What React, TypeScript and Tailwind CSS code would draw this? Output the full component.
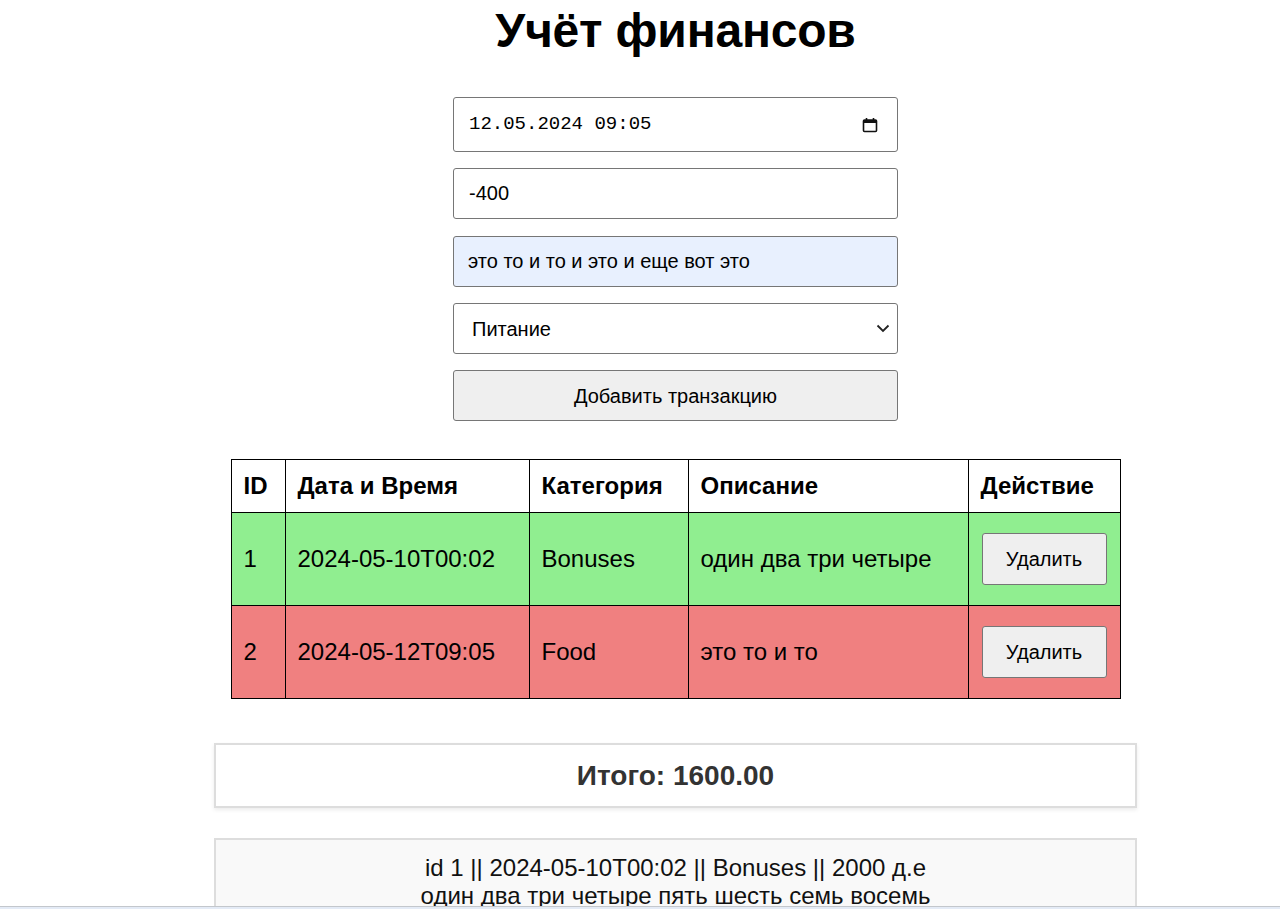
import React from "react";

type Tx = {
  id: number;
  date: string;
  category: string;
  description: string;
  income: boolean;
};

const rows: Tx[] = [
  { id: 1, date: "2024-05-10T00:02", category: "Bonuses", description: "один два три четыре", income: true },
  { id: 2, date: "2024-05-12T09:05", category: "Food", description: "это то и то", income: false },
];

function CalendarIcon() {
  return (
    <svg width="16" height="16" viewBox="0 0 16 16" fill="none">
      <rect x="1.5" y="3" width="13" height="11.5" rx="1" stroke="#111" strokeWidth="1.6" />
      <rect x="1.5" y="3" width="13" height="3" fill="#111" />
      <path d="M4.5 1v3M11.5 1v3" stroke="#111" strokeWidth="1.6" />
    </svg>
  );
}

function Chevron() {
  return (
    <svg width="14" height="9" viewBox="0 0 14 9" fill="none">
      <path d="M1.5 1.5l5.5 5.5 5.5-5.5" stroke="#222" strokeWidth="1.8" />
    </svg>
  );
}

export default function App() {
  return (
    <div className="h-[909px] overflow-hidden flex flex-col bg-white text-black font-['Liberation_Sans',Arial,sans-serif]">
      <div className="flex-1 overflow-hidden pl-[71px]">
        <h1 className="mt-[3px] text-center text-[48px] leading-[55px] font-bold tracking-[-0.2px]">Учёт финансов</h1>

        <div className="mt-[39px] mx-auto w-[445px] flex flex-col gap-4">
          <div className="relative h-[55px] border border-[#767676] rounded-[3px] flex items-center pl-[15px] pr-[19px]">
            <input
              readOnly
              value="12.05.2024 09:05"
              className="flex-1 bg-transparent outline-none text-[19px] font-['Liberation_Mono',monospace] text-black"
            />
            <CalendarIcon />
          </div>
          <input
            readOnly
            value="-400"
            className="h-[51px] border border-[#767676] rounded-[3px] px-[15px] text-[20px] outline-none"
          />
          <input
            readOnly
            value="это то и то и это и еще вот это"
            className="mt-[1px] h-[51px] border border-[#767676] rounded-[3px] px-[14px] text-[20px] outline-none bg-[#e8f0fe]"
          />
          <div className="h-[51px] border border-[#767676] rounded-[3px] flex items-center justify-between pl-[18px] pr-[7px] text-[20px]">
            <span>Питание</span>
            <Chevron />
          </div>
          <button className="h-[51px] border border-[#767676] rounded-[3px] bg-[#efefef] text-[20px]">
            Добавить транзакцию
          </button>
        </div>

        <table className="mt-[38px] mx-auto w-[889px] table-fixed border-collapse text-[24px]">
          <thead>
            <tr className="h-[53px] bg-white">
              <th className="w-[54px] border border-black px-3 text-left font-bold">ID</th>
              <th className="w-[244px] border border-black px-3 text-left font-bold">Дата и Время</th>
              <th className="w-[159px] border border-black px-3 text-left font-bold">Категория</th>
              <th className="w-[280px] border border-black px-3 text-left font-bold">Описание</th>
              <th className="w-[152px] border border-black px-3 text-left font-bold">Действие</th>
            </tr>
          </thead>
          <tbody>
            {rows.map((r) => (
              <tr key={r.id} className={`h-[93px] ${r.income ? "bg-[#90ee90]" : "bg-[#f08080]"}`}>
                <td className="border border-black px-3">{r.id}</td>
                <td className="border border-black px-3">{r.date}</td>
                <td className="border border-black px-3">{r.category}</td>
                <td className="border border-black px-3">{r.description}</td>
                <td className="border border-black px-[13px]">
                  <button className="w-[125px] h-[52px] border border-[#767676] rounded-[3px] bg-[#efefef] text-[20px]">
                    Удалить
                  </button>
                </td>
              </tr>
            ))}
          </tbody>
        </table>

        <div className="mt-[44px] mx-auto w-[923px] h-[65px] border-2 border-[#dddddd] shadow-[0_2px_4px_rgba(0,0,0,0.08)] flex items-center justify-center">
          <h3 className="text-[28px] font-bold text-[#333333]">Итого: 1600.00</h3>
        </div>

        <div className="mt-[30px] mx-auto w-[923px] border-2 border-[#dddddd] bg-[#f9f9f9] pt-[14px] pb-4 text-center text-[24px] leading-[28px] text-[#111]">
          <div>id 1 || 2024-05-10T00:02 || Bonuses || 2000 д.е</div>
          <div>один два три четыре пять шесть семь восемь</div>
        </div>
      </div>
      <div className="h-[3px] border-t border-[#c3c7cc] bg-[#e4ebf6]" />
    </div>
  );
}
